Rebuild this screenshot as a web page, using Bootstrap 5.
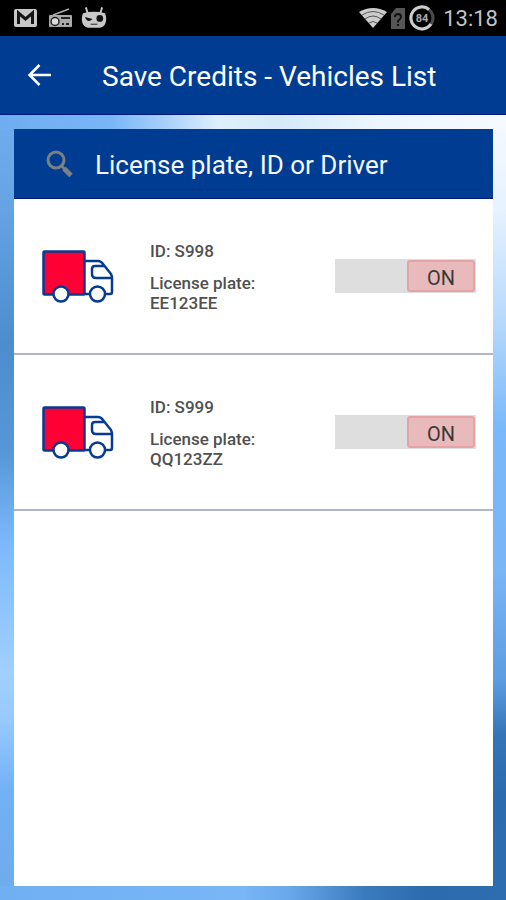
<!DOCTYPE html>
<html lang="en">
<head>
<meta charset="utf-8">
<meta name="viewport" content="width=device-width, initial-scale=1">
<title>Save Credits - Vehicles List</title>
<link href="https://cdn.jsdelivr.net/npm/bootstrap@5.3.0/dist/css/bootstrap.min.css" rel="stylesheet">
<style>
  :root { --brand: #003c91; --edge: 14px; }
  body { font-family: Roboto, "Liberation Sans", sans-serif; background: #73b1f2; }
  .status-bar { background: #000; height: 36px; padding: 0 8px 0 14px; color: #c4c4c4; }
  .clock { font-size: 22px; line-height: 36px; margin-left: 8px; padding-top: 2px; }
  .app-bar { background: var(--brand); height: 79px; border-bottom: 1px solid #00187c; padding-left: 27px; gap: 50px; }
  .app-title { font-size: 28px; line-height: 36px; font-weight: 400; padding-top: 4px; }
  .sky {
    padding: var(--edge);
    padding-right: 13px;
    background:
      linear-gradient(90deg, #70b0f2 0%, #78b6f6 48%, #69a8ea 57%, #3a7bbf 72%, #2c6cae 84%, #2e6eb0 100%) bottom / 100% 14px no-repeat,
      linear-gradient(90deg, #6fadf0 0%, #7ab6f6 22%, #a9d1fb 33%, #dfeffc 43%, #d5eafa 55%, #edf6fd 75%, #f6faff 100%) top / 100% 14px no-repeat,
      linear-gradient(180deg, #6fadf0 0%, #65a3e3 12%, #4d8dcd 29%, #5797d8 43%, #7dbafb 55%, #a1cfff 71%, #98c9fe 77%, #72b1f5 86%, #6eabea 100%) left / 14px 100% no-repeat,
      linear-gradient(180deg, #f6faff 0%, #e6f2ff 12%, #b4d7fb 27%, #79b8fa 40%, #7ab5f6 58%, #5d9ce0 72%, #3574b7 79%, #2c6cae 87%, #2e6eb0 100%) right / 13px 100% no-repeat;
  }
  .search-row { background: var(--brand); height: 70px; border-bottom: 1px solid #00187c; padding: 0 11px 0 31px; gap: 7px; }
  .search-box { background: transparent; color: #fff; border: 0; border-bottom: 1px solid #003680; border-radius: 0; font-size: 26px; line-height: 32px; padding: 12px 14px 8px; height: 53px; }
  .search-box::placeholder { color: #f4f7ff; opacity: 1; }
  .search-box:focus { background: transparent; color: #fff; box-shadow: none; outline: 1px solid #6fadf0; }
  .vehicle { min-height: 156px; border-bottom: 2px solid #b0b5cc; padding: 0 17px 0 28px; }
  .vehicle-pic { margin-top: 2px; }
  .vehicle-text { width: 150px; margin-left: 36px; padding-top: 2px; font-size: 17px; line-height: 20px; font-weight: 500; color: #505050; }
  .vehicle-text p { margin-bottom: 12px; }
  .toggle { width: 141px; height: 34px; background: #dedede; border: 0; padding: 1px; }
  .toggle-thumb { width: 68px; height: 32px; background: #e8babb; border: 2px solid #e5a3a6; border-radius: 3px; font-size: 20px; line-height: 32px; color: #3c3838; }
</style>
<script src="https://cdn.jsdelivr.net/npm/bootstrap@5.3.0/dist/js/bootstrap.bundle.min.js"></script>
</head>
<body class="min-vh-100 d-flex flex-column">
<svg class="d-none" aria-hidden="true">
  <symbol id="truck" viewBox="0 0 72 56">
    <g stroke="#073b91" stroke-width="2.5" stroke-linejoin="round">
      <rect x="1.5" y="2.500" width="41" height="43" rx="1" fill="#ff0034"/>
      <path d="M42.500 12H56q3 0 5 3l8 10q1 2 1 4v14q0 2-2 2H42.500z" fill="#fff"/>
      <path d="M62 17h-9q-3 0-3 3v5q0 4 4 4h15" fill="none"/>
      <circle cx="19" cy="45" r="7.500" fill="#fff"/>
      <circle cx="55.500" cy="45" r="7.500" fill="#fff"/>
    </g>
  </symbol>
</svg>

<div class="status-bar d-flex align-items-center">
  <svg width="23" height="18" viewBox="0 0 23 18" aria-hidden="true"><rect width="23" height="18" rx="2" fill="#c8c8c8"/><path d="M4.500 15V4l7 6 7-6v11" fill="none" stroke="#151515" stroke-width="3"/></svg>
  <svg class="mx-2 ps-1" width="28" height="20" viewBox="0 0 24 20" aria-hidden="true"><path d="M4 7L20 1" stroke="#aaa" stroke-width="1.500"/><rect x="0" y="7" width="23" height="12" rx="1" fill="#aaa"/><circle cx="6" cy="13.500" r="4" fill="#ddd" stroke="#222" stroke-width="1.500"/><path d="M12 10h9M13 16h2m2 0h3" stroke="#222" stroke-width="2"/></svg>
  <svg width="26" height="24" viewBox="0 0 27 24" aria-hidden="true"><path d="M5 1l2 6M22 1l-2 6" stroke="#c8c8c8" stroke-width="2"/><path d="M2 7Q13.500 4 25 7C28 15 25 22 19 22H8C2 22-1 15 2 7z" fill="#c8c8c8"/><path d="M4 11l8 2q-5 5-8-2z" fill="#111"/><circle cx="19.500" cy="12.500" r="3.500" fill="#111"/><path d="M10 18.500h7" stroke="#444" stroke-width="1.300"/></svg>
  <svg class="ms-auto" width="28" height="20" viewBox="0 0 28 20" aria-hidden="true"><path d="M0 4Q14-4 28 4L14 20z" fill="#ccc"/><path d="M3 7q11-7 22 0M6 11q8-6 16 0M10 15q4-3 8 0" fill="none" stroke="#555" stroke-width="1"/></svg>
  <svg class="ms-1 me-1" width="14" height="21" viewBox="0 0 14 21" role="img" aria-label="Unknown SIM"><path d="M5 0h9v21H0V6z" fill="#565656"/><path d="M4 9q0-3 3-3t3 3q0 2-3 4v1.500M7 16v2" fill="none" stroke="#111" stroke-width="2"/></svg>
  <svg width="26" height="26" viewBox="0 0 26 26" role="img" aria-label="Battery 84"><circle cx="13" cy="13" r="11" fill="none" stroke="#4b4b4b" stroke-width="3"/><path d="M20 4.500A11 11 0 1 0 22 19" fill="none" stroke="#ccc" stroke-width="3"/><text x="13" y="17" text-anchor="middle" font-family="Roboto, sans-serif" font-size="11" font-weight="700" fill="#aaa">84</text></svg>
  <time class="clock">13:18</time>
</div>

<header class="app-bar d-flex align-items-center text-white">
  <button type="button" class="btn p-0 border-0 d-flex text-white" aria-label="Back"><svg width="25" height="24" viewBox="0 0 25 24" fill="none" stroke="#fff" stroke-width="2.500"><path d="M12.500 2L2.500 12l10 10M2.500 12H24"/></svg></button>
  <h1 class="app-title mb-0">Save Credits - Vehicles List</h1>
</header>

<main class="sky flex-grow-1 d-flex flex-column">
  <section class="bg-white flex-grow-1">
    <div class="search-row d-flex align-items-center">
      <label for="vehicle-search" class="d-flex" aria-label="Search vehicles"><svg width="29" height="29" viewBox="0 0 29 29" fill="none" stroke="#7b8082"><circle cx="11" cy="11" r="8" stroke-width="3"/><path d="M16.500 17l3 3" stroke-width="3"/><path d="M19 19.500l7 7" stroke-width="5"/></svg></label>
      <input id="vehicle-search" class="search-box form-control" type="text" placeholder="License plate, ID or Driver">
    </div>
    <ul class="list-unstyled mb-0">
      <li class="vehicle d-flex align-items-center">
        <svg class="vehicle-pic" width="72" height="56" aria-hidden="true"><use href="#truck"/></svg>
        <div class="vehicle-text"><p>ID: S998</p><div>License plate:<br>EE123EE</div></div>
        <button type="button" class="toggle ms-auto d-flex justify-content-end" role="switch" aria-checked="true" aria-label="Vehicle S998"><span class="toggle-thumb d-block text-center">ON</span></button>
      </li>
      <li class="vehicle d-flex align-items-center">
        <svg class="vehicle-pic" width="72" height="56" aria-hidden="true"><use href="#truck"/></svg>
        <div class="vehicle-text"><p>ID: S999</p><div>License plate:<br>QQ123ZZ</div></div>
        <button type="button" class="toggle ms-auto d-flex justify-content-end" role="switch" aria-checked="true" aria-label="Vehicle S999"><span class="toggle-thumb d-block text-center">ON</span></button>
      </li>
    </ul>
  </section>
</main>
</body>
</html>
